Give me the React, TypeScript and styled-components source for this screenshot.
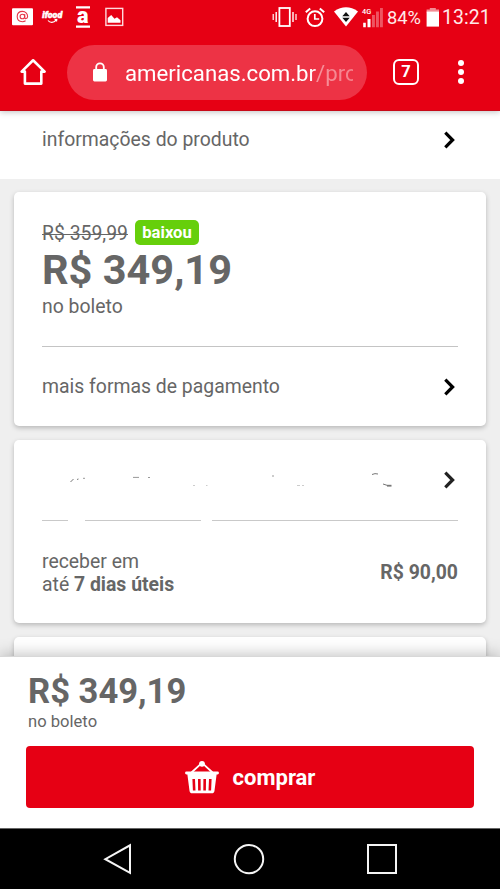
import React from 'react';
import styled, { createGlobalStyle } from 'styled-components';

const GlobalStyle = createGlobalStyle`
  * { box-sizing: border-box; }
  html, body { margin: 0; padding: 0; }
  body { font-family: Roboto, "Liberation Sans", sans-serif; color: #666; background: #f0f0f0; }
`;

const Screen = styled.div`
  width: 500px;
  height: 889px;
  display: flex;
  flex-direction: column;
  overflow: hidden;
  background: #efefef;
`;

const Header = styled.header`
  height: 111px;
  flex: none;
  background: #e60014;
  border-bottom: 1px solid #c80a18;
  color: #fff;
  box-shadow: 0 1px 6px rgba(0, 0, 0, 0.25);
  z-index: 1;
`;

const StatusBar = styled.div`
  height: 34px;
  display: flex;
  align-items: center;
  padding-left: 12px;
  svg { flex: none; display: block; overflow: visible; }
`;

const Slot = styled.span<{ $w: number; $gap?: number }>`
  display: flex;
  flex: none;
  width: ${(p) => p.$w}px;
  margin-left: ${(p) => p.$gap ?? 0}px;
`;

const StatusText = styled.span<{ $w: number; $gap: number; $size: number; $spacing?: number }>`
  flex: none;
  width: ${(p) => p.$w}px;
  margin-left: ${(p) => p.$gap}px;
  font-size: ${(p) => p.$size}px;
  letter-spacing: ${(p) => p.$spacing ?? 0}px;
  line-height: 34px;
  padding-top: 1px;
  white-space: nowrap;
  color: #ffe9e9;
`;

const AddressBar = styled.div`
  height: 76px;
  display: flex;
  align-items: center;
  padding-left: 20px;
  svg { flex: none; display: block; }
`;

const UrlPill = styled.div`
  width: 300px;
  height: 55px;
  margin-left: 21px;
  padding: 0 14px 0 26px;
  border-radius: 28px;
  background: #ed3345;
  display: flex;
  align-items: center;
`;

const Url = styled.span`
  flex: 1;
  margin-left: 18px;
  padding-top: 1px;
  overflow: hidden;
  white-space: nowrap;
  font-size: 22.2px;
  line-height: 32px;
  mask-image: linear-gradient(to right, #000 78%, rgba(0, 0, 0, 0.75) 100%);
  span { color: #f799a2; }
`;

const TabCount = styled.div`
  width: 26px;
  height: 26px;
  margin-left: 26px;
  border: 2.5px solid #fff;
  border-radius: 6px;
  display: flex;
  align-items: center;
  justify-content: center;
  font-size: 16.5px;
  line-height: 20px;
  font-weight: 700;
`;

const Dots = styled.div`
  display: flex;
  flex-direction: column;
  gap: 2.6px;
  margin-left: 39px;
`;

const Dot = styled.i`
  width: 6px;
  height: 6px;
  border-radius: 50%;
  background: #fff;
`;

const Content = styled.main`
  flex: 1;
  min-height: 0;
  overflow: hidden;
`;

const InfoRow = styled.section`
  height: 68px;
  padding: 0 42px 11px;
  display: flex;
  align-items: center;
  justify-content: space-between;
  background: #fff;
`;

const Cards = styled.div`
  padding-top: 13px;
`;

const Card = styled.section`
  margin: 0 14px 14px;
  padding: 0 28px;
  border-radius: 5px;
  background: #fff;
  box-shadow: 0 2px 5px rgba(0, 0, 0, 0.23);
`;

const PriceBlock = styled.div`
  height: 154px;
  padding-top: 28px;
`;

const OldPriceRow = styled.div`
  display: flex;
  align-items: center;
  height: 25px;
`;

const OldPrice = styled.s`
  width: 93px;
  padding-top: 2px;
  font-size: 19.4px;
  line-height: 23px;
  text-decoration-thickness: 1.4px;
`;

const Badge = styled.span`
  width: 64px;
  height: 25px;
  border-radius: 5px;
  background: #66cf0b;
  color: #fff;
  font-size: 16.6px;
  font-weight: 700;
  line-height: 25px;
  text-align: center;
`;

const Price = styled.div<{ $size: number; $line: number }>`
  font-size: ${(p) => p.$size}px;
  line-height: ${(p) => p.$line}px;
  font-weight: 700;
  white-space: nowrap;
`;

const Label = styled.div<{ $size?: number; $line?: number; $drop?: number }>`
  font-size: ${(p) => p.$size ?? 19.4}px;
  line-height: ${(p) => p.$line ?? 24}px;
  padding-top: ${(p) => p.$drop ?? 0}px;
  white-space: nowrap;
`;

const Rule = styled.div`
  height: 1px;
  background: #c4c4c4;
`;

const BrokenRule = styled.div`
  display: flex;
  height: 1px;
`;

const RulePart = styled.span<{ $w: number; $gap?: number }>`
  width: ${(p) => p.$w}px;
  margin-left: ${(p) => p.$gap ?? 0}px;
  background: #c9c9c9;
`;

const LinkRow = styled.div<{ $h: number }>`
  height: ${(p) => p.$h}px;
  display: flex;
  align-items: center;
  justify-content: space-between;
`;

const BuyBar = styled.footer`
  height: 172px;
  flex: none;
  padding: 13px 26px 0;
  background: #fff;
  border-top: 1px solid #d8d8d8;
  box-shadow: 0 -1px 15px rgba(0, 0, 0, 0.26);
  z-index: 1;
`;

const BuySummary = styled.div`
  height: 76px;
  padding-left: 2px;
`;

const BuyButton = styled.button`
  width: 448px;
  height: 62px;
  padding: 0;
  border: 0;
  border-radius: 4px;
  display: flex;
  align-items: center;
  justify-content: center;
  gap: 14px;
  background: #e60014;
  color: #fff;
  font-family: inherit;
  font-size: 22px;
  font-weight: 700;
`;

const SystemNav = styled.nav`
  height: 61px;
  flex: none;
  display: flex;
  align-items: center;
  padding-left: 103px;
  background: #000;
  border-top: 1px solid #666;
  z-index: 2;
  svg { display: block; flex: none; }
`;

const Chevron = ({ color = '#000' }: { color?: string }) => (
  <svg width="18" height="20" viewBox="0 0 18 20" fill="none" stroke={color} strokeWidth="3.2">
    <path d="M5.3 2.7 12.6 10 5.3 17.3" />
  </svg>
);

const MailIcon = () => (
  <svg width="21" height="18" viewBox="0 0 21 18">
    <rect width="21" height="17" y=".3" rx="1" fill="#fff" />
    <g fill="none" stroke="#e6384a" strokeWidth="1.1">
      <circle cx="10.4" cy="8.5" r="2.3" />
      <path d="M12.7 6.1v3.3c0 2 2.9 1.4 2.9-1 0-3-2.2-5-5.1-5-3.2 0-5.3 2.2-5.3 5.2 0 3.2 2.2 5.1 5.2 5.1 1.3 0 2.3-.3 3.2-.9" />
    </g>
  </svg>
);

const FoodIcon = () => (
  <svg width="22" height="15" viewBox="0 0 22 15">
    <text x=".3" y="8.2" fill="#fff" stroke="#fff" strokeWidth=".5" fontFamily="Roboto, sans-serif" fontSize="9" fontWeight="900" fontStyle="italic" textLength="20" lengthAdjust="spacingAndGlyphs">ifood</text>
    <path d="M6 10.5c2 2.6 5.6 2.5 8.2-.3M12.6 9.7l2.2-.2-.3 2" fill="none" stroke="#fff" strokeWidth="1.2" />
  </svg>
);

const StoreIcon = () => (
  <svg width="14" height="24" viewBox="0 0 14 24">
    <path d="M0 1.2h14v2.2H0zM0 20.6h14v2.2H0z" fill="#fff" />
    <text x="1" y="17.9" fill="#fff" fontFamily="Roboto, sans-serif" fontSize="22" fontWeight="900" textLength="11.5" lengthAdjust="spacingAndGlyphs">a</text>
  </svg>
);

const PictureIcon = () => (
  <svg width="19" height="20" viewBox="0 0 19 20">
    <rect x=".9" y="1.4" width="16.8" height="17" fill="none" stroke="#ffd8dc" strokeWidth="1.4" />
    <path d="M2.7 15.8V11l3.5-3 3.3 3.7 2.5-1.5 3.5 3v2.6z" fill="#fff" />
  </svg>
);

const VibrateIcon = () => (
  <svg width="25" height="20" viewBox="0 0 25 20" fill="none" stroke="#fff">
    <rect x="7.4" y="1" width="10.4" height="18" strokeWidth="1.8" />
    <path d="M4.2 5v10M21 5v10" strokeWidth="1.4" />
    <path d="M1.2 7v6M24 7v6" strokeWidth="1.2" />
  </svg>
);

const AlarmIcon = () => (
  <svg width="20" height="21" viewBox="0 0 20 21" fill="none" stroke="#fff">
    <circle cx="10" cy="11.7" r="7.4" strokeWidth="2" />
    <path d="M9.8 7v5h4.4" strokeWidth="1.7" />
    <path d="M.8 5.3 5.2 1.4M14.8 1.4l4.4 3.9" strokeWidth="2" />
  </svg>
);

const WifiIcon = () => (
  <svg width="24" height="20" viewBox="0 0 24 20">
    <path d="M0 4.5Q12-3.8 24 4.5L12 19.6z" fill="#fff" />
    <path d="M8.3 9.3 12 5.1l3.7 4.2zM8.3 10.8 12 15l3.7-4.2z" fill="#111" />
  </svg>
);

const SignalIcon = () => (
  <svg width="22" height="21" viewBox="0 0 22 21">
    <text x="0" y="6.7" fill="#fff" fontFamily="Roboto, sans-serif" fontSize="7.8" fontWeight="500" textLength="9.2" lengthAdjust="spacingAndGlyphs">4G</text>
    <path d="M1.2 15.7h2.6v4.5H1.2zM5.5 11.9h3v8.3h-3z" fill="#fff" />
    <path d="M10 8h2.9v12.2H10zM14 4.5h2.9v15.7H14zM18 1h2.9v19.2H18z" fill="#ee5562" />
  </svg>
);

const BatteryIcon = () => (
  <svg width="14" height="21" viewBox="0 0 14 21">
    <path d="M3.8 1h6v1.6H13v3H.6v-3h3.2z" fill="#f38b94" />
    <path d="M.6 4.6H13v15H.6z" fill="#fff" />
  </svg>
);

const HomeIcon = () => (
  <svg width="26" height="28" viewBox="0 0 26 28" fill="none" stroke="#fff" strokeWidth="2.6" strokeLinejoin="round">
    <path d="M1.6 13.6 13.1 2.3l11.5 11.3h-3.3v12H4.9v-12z" />
  </svg>
);

const LockIcon = () => (
  <svg width="14" height="20" viewBox="0 0 14 20">
    <rect y="7" width="14" height="12.4" rx="1.4" fill="#fff" />
    <path d="M3.2 8V5.1a3.8 3.8 0 0 1 7.6 0V8" fill="none" stroke="#fff" strokeWidth="1.8" />
  </svg>
);

const BasketIcon = () => (
  <svg width="34" height="34" viewBox="0 0 34 34">
    <path d="m6.5 12.5 9.4-8.7h2.2l9.4 8.7" fill="none" stroke="#fff" strokeWidth="1.8" />
    <circle cx="17" cy="3.8" r="2.9" fill="#fff" />
    <path d="M1.5 11.6h31a1.4 1.4 0 0 1 0 2.9h-.9l-2.1 16.2c-.3 1.9-1.2 2.6-2.8 2.6H7.3c-1.6 0-2.5-.7-2.8-2.6L2.4 14.5h-.9a1.4 1.4 0 0 1 0-2.9z" fill="#fff" />
    <path d="m8.7 19 .5 11.5M14.3 19l.1 11.5M19.7 19l-.1 11.5M25.3 19l-.5 11.5" stroke="#e60014" strokeWidth="2.6" />
  </svg>
);

const ErasedText = () => (
  <svg width="360" height="24" viewBox="0 0 360 24" fill="none" stroke="#777" strokeWidth="1">
    <path d="m28.5 14 3-3M35 11.5l1.5-.5" />
    <path d="M41 10.3h2M91 9.4h6M106 9.5h2M230 8h2" stroke="#999" />
    <path d="M151 17.5h2M164 17.5h1.5M255 17.5h3M260 17.5h2" stroke="#ccc" />
    <path d="M330 6.5q3-1.5 6-.5M341 16l4 1.3" />
    <path d="M345 17.7h4.5" strokeWidth="1.8" />
  </svg>
);

export default function App() {
  return (
    <>
      <GlobalStyle />
      <Screen>
        <Header>
          <StatusBar>
            <Slot $w={21}><MailIcon /></Slot>
            <Slot $w={22} $gap={9}><FoodIcon /></Slot>
            <Slot $w={14} $gap={12}><StoreIcon /></Slot>
            <Slot $w={19} $gap={15}><PictureIcon /></Slot>
            <Slot $w={25} $gap={148}><VibrateIcon /></Slot>
            <Slot $w={20} $gap={8}><AlarmIcon /></Slot>
            <Slot $w={24} $gap={9}><WifiIcon /></Slot>
            <Slot $w={22} $gap={4}><SignalIcon /></Slot>
            <StatusText $w={34} $gap={3} $size={18.3}>84%</StatusText>
            <Slot $w={14} $gap={5}><BatteryIcon /></Slot>
            <StatusText $w={50} $gap={2} $size={19.4} $spacing={0.1}>13:21</StatusText>
          </StatusBar>
          <AddressBar>
            <HomeIcon />
            <UrlPill>
              <LockIcon />
              <Url>americanas.com.br<span>/produto</span></Url>
            </UrlPill>
            <TabCount>7</TabCount>
            <Dots><Dot /><Dot /><Dot /></Dots>
          </AddressBar>
        </Header>
        <Content>
          <InfoRow>
            <Label>informações do produto</Label>
            <Chevron />
          </InfoRow>
          <Cards>
            <Card>
              <PriceBlock>
                <OldPriceRow>
                  <OldPrice>R$ 359,99</OldPrice>
                  <Badge>baixou</Badge>
                </OldPriceRow>
                <Price $size={41.5} $line={50}>R$ 349,19</Price>
                <Label>no boleto</Label>
              </PriceBlock>
              <Rule />
              <LinkRow $h={79}>
                <Label>mais formas de pagamento</Label>
                <Chevron />
              </LinkRow>
            </Card>
            <Card>
              <LinkRow $h={80}>
                <ErasedText />
                <Chevron color="#222" />
              </LinkRow>
              <BrokenRule>
                <RulePart $w={26} />
                <RulePart $w={116} $gap={17} />
                <RulePart $w={246} $gap={11} />
              </BrokenRule>
              <LinkRow $h={102}>
                <Label $line={23} $drop={2}>
                  receber em<br />até <b>7 dias úteis</b>
                </Label>
                <Label $drop={2}><b>R$ 90,00</b></Label>
              </LinkRow>
            </Card>
            <Card>
              <PriceBlock />
            </Card>
          </Cards>
        </Content>
        <BuyBar>
          <BuySummary>
            <Price $size={34.6} $line={42}>R$ 349,19</Price>
            <Label $size={16.6} $line={20}>no boleto</Label>
          </BuySummary>
          <BuyButton><BasketIcon />comprar</BuyButton>
        </BuyBar>
        <SystemNav>
          <svg width="294" height="32" viewBox="0 0 294 32" fill="none" stroke="#f5f5f5" strokeWidth="2">
            <path d="M27 2.3v27.6L2.3 16.2z" />
            <circle cx="146" cy="16.1" r="14.2" />
            <path d="M265 2h28v28h-28z" />
          </svg>
        </SystemNav>
      </Screen>
    </>
  );
}
